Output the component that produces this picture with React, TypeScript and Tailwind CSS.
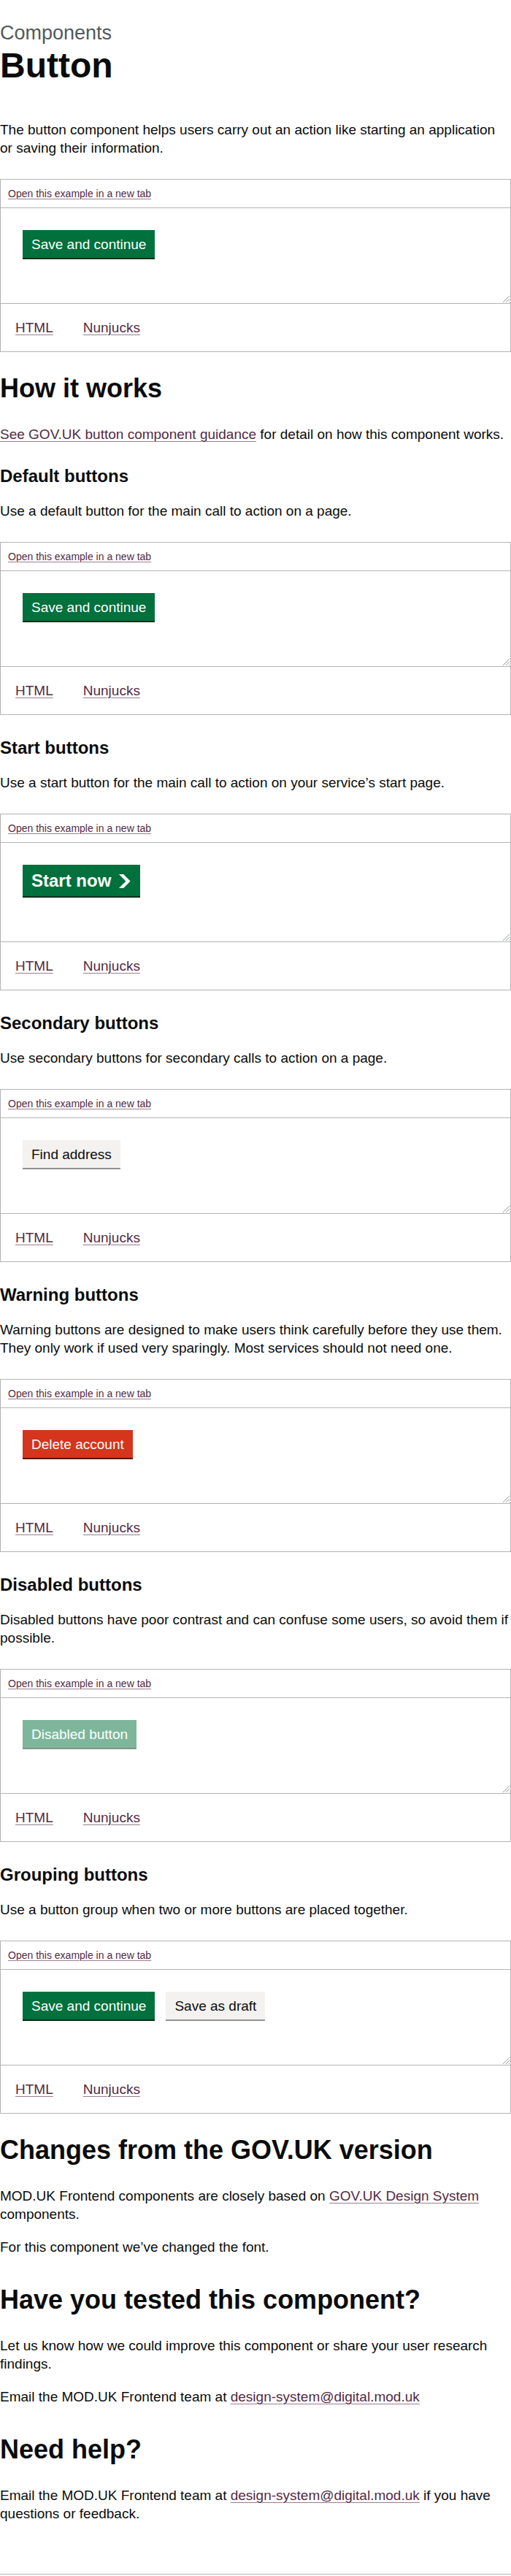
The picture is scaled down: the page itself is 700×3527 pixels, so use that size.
import type { ReactNode } from 'react';

const FONT = { fontFamily: '"Liberation Sans", Arial, sans-serif' };

const linkCls =
  'text-[#532a45] underline decoration-1 underline-offset-[0.15em] decoration-[#532a45]/60';

function Para({ children, className = '' }: { children: ReactNode; className?: string }) {
  return <p className={`text-[19px] leading-[25px] text-[#0b0c0c] ${className}`}>{children}</p>;
}

function HeadingL({ children, className = '' }: { children: ReactNode; className?: string }) {
  return <h2 className={`text-[36px] leading-[40px] font-bold text-[#0b0c0c] ${className}`}>{children}</h2>;
}

function HeadingM({ children, className = '' }: { children: ReactNode; className?: string }) {
  return <h3 className={`text-[24px] leading-[30px] font-bold text-[#0b0c0c] ${className}`}>{children}</h3>;
}

type Variant = 'primary' | 'secondary' | 'warning' | 'disabled';

const VARIANTS: { [key in Variant]: string } = {
  primary: 'bg-[#00703c] text-white shadow-[0_2px_0_#002d18]',
  secondary: 'bg-[#f3f2f1] text-[#0b0c0c] shadow-[0_2px_0_#929191]',
  warning: 'bg-[#d4351c] text-white shadow-[0_2px_0_#55150b]',
  disabled: 'bg-[#00703c] text-white shadow-[0_2px_0_#002d18] opacity-50',
};

function Btn({ variant = 'primary', children }: { variant?: Variant; children: ReactNode }) {
  return (
    <button
      type="button"
      className={`inline-block border-2 border-transparent pt-[8px] pb-[7px] px-[10px] text-[19px] leading-[19px] ${VARIANTS[variant]}`}
    >
      {children}
    </button>
  );
}

function StartBtn() {
  return (
    <button
      type="button"
      className="inline-flex items-center border-2 border-transparent pt-[8px] pb-[7px] px-[10px] text-[24px] leading-[24px] font-bold bg-[#00703c] text-white shadow-[0_2px_0_#002d18]"
    >
      Start now
      <svg className="ml-[10px] shrink-0" width="17.5" height="19" viewBox="0 0 33 40" aria-hidden="true">
        <path fill="currentColor" d="M0 0h13l20 20-20 20H0l20-20z" />
      </svg>
    </button>
  );
}

// Example panel: header link, preview area with resize grip, code tabs
function Example({ children }: { children: ReactNode }) {
  return (
    <div className="mt-[30px] border border-[#b1b4b6]">
      <div className="px-[10px] py-[10px] border-b border-[#b1b4b6] text-[14px] leading-[18px]">
        <a href="#" className={linkCls}>
          Open this example in a new tab
        </a>
      </div>
      <div className="relative pt-[30px] pb-[62px] px-[30px] border-b border-[#b1b4b6] flex gap-[15px] items-start">
        {children}
        <svg className="absolute right-0 bottom-0" width="12" height="12" viewBox="0 0 12 12" aria-hidden="true">
          <path d="M11 2L2 11M11 6L6 11M11 10L10 11" stroke="#9a9a9a" strokeWidth="1" />
        </svg>
      </div>
      <div className="flex gap-[41px] pl-[20px] py-[20px] text-[19px] leading-[25px]">
        <a href="#" className={linkCls}>HTML</a>
        <a href="#" className={linkCls}>Nunjucks</a>
      </div>
    </div>
  );
}

export default function App() {
  return (
    <div className="w-[700px] bg-white pt-[30px]" style={FONT}>
      <span className="block text-[27px] leading-[30px] text-[#505a5f]">Components</span>
      <h1 className="mt-[5px] text-[48px] leading-[50px] font-bold text-[#0b0c0c]">Button</h1>

      <Para className="mt-[50px]">
        The button component helps users carry out an action like starting an application or saving their information.
      </Para>

      <Example>
        <Btn>Save and continue</Btn>
      </Example>

      <HeadingL className="mt-[30px]">How it works</HeadingL>
      <Para className="mt-[30px]">
        <a href="#" className={linkCls}>See GOV.UK button component guidance</a> for detail on how this component works.
      </Para>

      <HeadingM className="mt-[30px]">Default buttons</HeadingM>
      <Para className="mt-[20px]">Use a default button for the main call to action on a page.</Para>
      <Example>
        <Btn>Save and continue</Btn>
      </Example>

      <HeadingM className="mt-[30px]">Start buttons</HeadingM>
      <Para className="mt-[20px]">Use a start button for the main call to action on your service’s start page.</Para>
      <Example>
        <StartBtn />
      </Example>

      <HeadingM className="mt-[30px]">Secondary buttons</HeadingM>
      <Para className="mt-[20px]">Use secondary buttons for secondary calls to action on a page.</Para>
      <Example>
        <Btn variant="secondary">Find address</Btn>
      </Example>

      <HeadingM className="mt-[30px]">Warning buttons</HeadingM>
      <Para className="mt-[20px]">
        Warning buttons are designed to make users think carefully before they use them. They only work if used very sparingly. Most services should not need one.
      </Para>
      <Example>
        <Btn variant="warning">Delete account</Btn>
      </Example>

      <HeadingM className="mt-[30px]">Disabled buttons</HeadingM>
      <Para className="mt-[20px]">
        Disabled buttons have poor contrast and can confuse some users, so avoid them if possible.
      </Para>
      <Example>
        <Btn variant="disabled">Disabled button</Btn>
      </Example>

      <HeadingM className="mt-[30px]">Grouping buttons</HeadingM>
      <Para className="mt-[20px]">Use a button group when two or more buttons are placed together.</Para>
      <Example>
        <Btn>Save and continue</Btn>
        <Btn variant="secondary">Save as draft</Btn>
      </Example>

      <HeadingL className="mt-[30px]">Changes from the GOV.UK version</HeadingL>
      <Para className="mt-[30px]">
        MOD.UK Frontend components are closely based on <a href="#" className={linkCls}>GOV.UK Design System</a> components.
      </Para>
      <Para className="mt-[20px]">For this component we’ve changed the font.</Para>

      <HeadingL className="mt-[40px]">Have you tested this component?</HeadingL>
      <Para className="mt-[30px]">
        Let us know how we could improve this component or share your user research findings.
      </Para>
      <Para className="mt-[20px]">
        Email the MOD.UK Frontend team at <a href="#" className={linkCls}>design-system@digital.mod.uk</a>
      </Para>

      <HeadingL className="mt-[40px]">Need help?</HeadingL>
      <Para className="mt-[30px]">
        Email the MOD.UK Frontend team at <a href="#" className={linkCls}>design-system@digital.mod.uk</a> if you have questions or feedback.
      </Para>

      <div className="mt-[70px] border-t border-[#b1b4b6]" />
    </div>
  );
}
